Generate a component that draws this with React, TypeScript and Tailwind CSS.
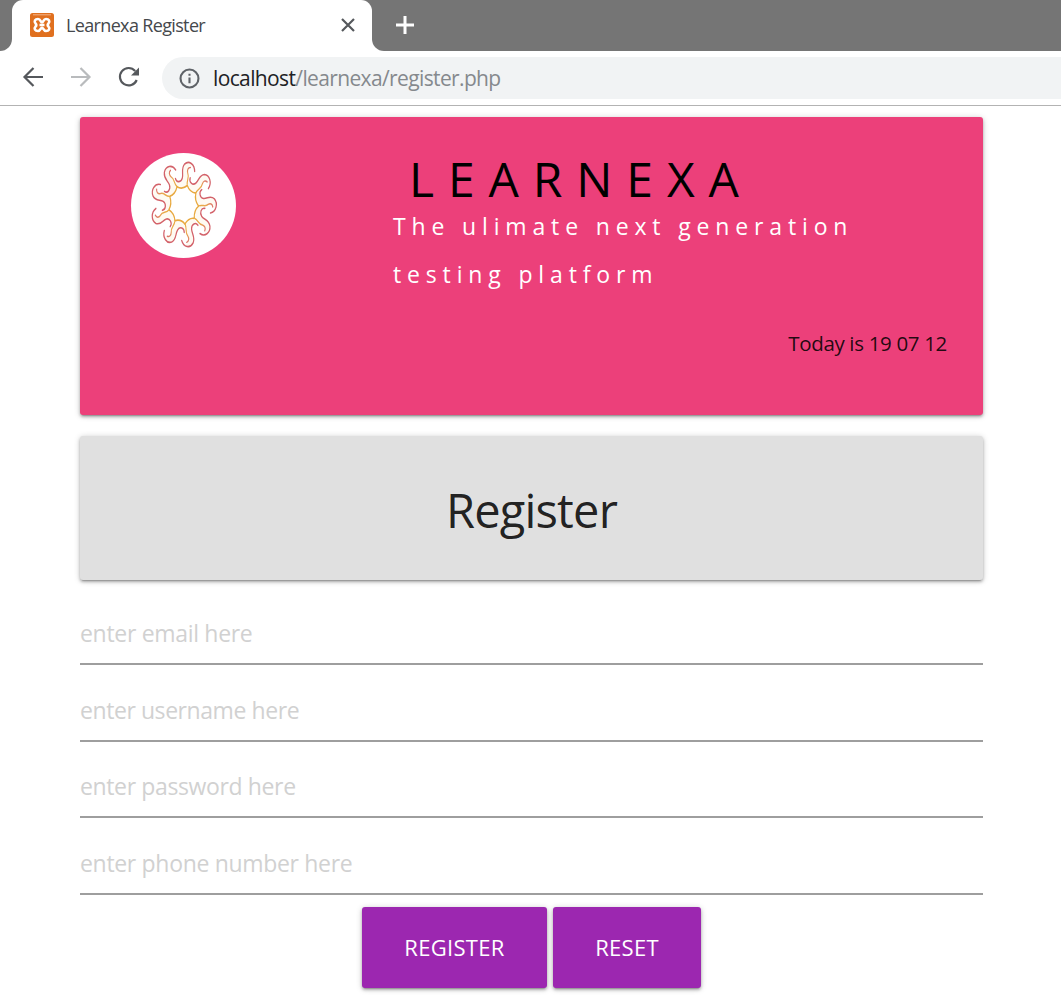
import React from "react";

const arms = [0, 40, 80, 120, 160, 200, 240, 280, 320];

function SunLogo() {
  return (
    <svg viewBox="0 0 105 105" className="size-[105px] rounded-full bg-white" fill="none" strokeLinecap="round">
      <defs>
        <radialGradient id="sun" gradientUnits="userSpaceOnUse" cx="0" cy="0" r="43">
          <stop offset="0.45" stopColor="#e8a940" />
          <stop offset="0.68" stopColor="#eaa950" />
          <stop offset="0.86" stopColor="#dd7a68" />
          <stop offset="1" stopColor="#d0606a" />
        </radialGradient>
      </defs>
      <g transform="translate(52.5 51.5) scale(0.77 1)">
        {arms.map((a) => (
          <g key={a} transform={`rotate(${a})`}>
            <path d="M12 -38 C10 -43 4 -43 1 -40 C-3 -36 -1 -32 -1.500 -28 C-2 -22 -7 -21 -10 -24 L-8.400 -17.800 Q-2 -15 5 -19 C3.500 -24 8 -28 5.500 -32 C4 -35 7 -39 12 -38Z" fill="#fefaf2" />
            <path d="M5 -19 Q-2 -14.500 -8.400 -17.800" stroke="url(#sun)" strokeWidth="1.600" />
            <path d="M5 -19 C3.500 -24 8 -27 5.500 -31.500 C4.500 -34.500 6 -37 9 -37" stroke="url(#sun)" strokeWidth="1.500" />
            <path d="M14.500 -33 C14.500 -40.500 7 -44.500 1.500 -40.500 C-3.500 -36 0 -31 -1.500 -26.500 C-3 -22 -9 -21.500 -10.500 -26" stroke="#d3626a" strokeWidth="1.600" />
          </g>
        ))}
      </g>
    </svg>
  );
}

function Favicon() {
  return (
    <svg viewBox="0 0 24 24" className="size-6" fill="none">
      <rect width="24" height="24" rx="2.5" fill="#e0701f" />
      <path d="M3 1.800H21" stroke="#f3b48a" strokeWidth="1" />
      <path
        d="M9.500 12H14.500M12 9.300C10.500 9.300 10.800 6 8 6C5 6 3.800 8.500 5.500 10.300C6.600 11.500 6.600 12.500 5.500 13.700C3.800 15.500 5 18 8 18C10.800 18 10.500 14.700 12 14.700C13.500 14.700 13.200 18 16 18C19 18 20.200 15.500 18.500 13.700C17.400 12.500 17.400 11.500 18.500 10.300C20.200 8.500 19 6 16 6C13.200 6 13.500 9.300 12 9.300Z"
        stroke="#fff"
        strokeWidth="2.600"
        strokeLinejoin="round"
      />
    </svg>
  );
}

function Browser() {
  return (
    <header>
      <div className="flex h-[51px] bg-white">
        <div className="w-3 rounded-br-[12px] bg-[#757575]" />
        <div className="w-[360px] bg-[#757575]">
          <div className="flex h-full items-center rounded-t-[11px] bg-white pb-0.5 pl-[18px] pr-[17px]">
            <Favicon />
            <span className="ml-3 text-[18px] leading-6 tracking-[-0.650px] text-[#45484c]">Learnexa Register</span>
            <svg viewBox="0 0 14 14" className="ml-auto size-3.5" stroke="#55585c" strokeWidth="2.200">
              <path d="M1 1l12 12M13 1L1 13" />
            </svg>
          </div>
        </div>
        <div className="flex flex-1 items-center rounded-bl-[12px] bg-[#757575] pb-0.5 pl-[23px]">
          <svg viewBox="0 0 20 20" className="size-5" stroke="#fff" strokeWidth="3">
            <path d="M10 1v18M1 10h18" />
          </svg>
        </div>
      </div>
      <div className="flex h-[55px] items-center border-b border-[#b3b3b3] pl-[22px]">
        <svg viewBox="0 0 22 22" className="mb-0.5 size-[22px]" fill="none" stroke="#55585c" strokeWidth="2.200">
          <path d="M21 11H2.500M11.500 2L2.500 11l9 9" />
        </svg>
        <svg viewBox="0 0 22 22" className="mb-0.5 ml-[26px] size-[22px]" fill="none" stroke="#b9bbbd" strokeWidth="2.200">
          <path d="M1 11h18.500M10.500 2l9 9-9 9" />
        </svg>
        <svg viewBox="0 0 22 22" className="mb-0.5 ml-[26px] size-[22px]" fill="none" stroke="#55585c" strokeWidth="2.200">
          <path d="M18.700 14A8.700 8.700 0 1 1 17.200 5" />
          <path d="M21 1.500v8h-8z" fill="#55585c" stroke="none" />
        </svg>
        <div className="ml-[22px] flex h-[42px] flex-1 items-center rounded-l-full bg-[#f1f3f4] pl-[17px]">
          <svg viewBox="0 0 22 22" className="size-[21px]" fill="none" stroke="#5f6368" strokeWidth="2.200">
            <circle cx="11" cy="11" r="9.400" />
            <path d="M11 10v6M11 6v2.200" />
          </svg>
          <span className="ml-[13px] text-[21px] leading-7 tracking-[-0.630px] text-[#85898d]">
            <span className="text-[#202124]">localhost</span>/learnexa/register.php
          </span>
        </div>
      </div>
    </header>
  );
}

const shadow =
  "shadow-[0_2px_3px_0_rgba(0,0,0,0.24),0_3px_1px_-2px_rgba(0,0,0,0.15),0_1px_6px_0_rgba(0,0,0,0.2)]";

const fields = [
  { label: "enter email here", cls: "h-[77px] tracking-[-0.310px]" },
  { label: "enter username here", cls: "h-[77px] tracking-[-0.430px]" },
  { label: "enter password here", cls: "h-[76px] tracking-[-0.370px]" },
  { label: "enter phone number here", cls: "h-[77px] tracking-[-0.320px]" },
];

export default function App() {
  return (
    <div className="h-[1001px] overflow-hidden bg-white font-['Open_Sans','Noto_Sans',sans-serif]">
      <Browser />
      <main className="ml-20 w-[903px] pt-[11px]">
        <section className={`flex h-[298px] rounded-[3px] bg-[#ec407a] ${shadow}`}>
          <div className="w-[313px] pl-[51px] pt-9">
            <SunLogo />
          </div>
          <div className="flex flex-1 flex-col pr-9 pt-[38px]">
            <h1 className="pl-[16px] text-[48px] leading-[48px] tracking-[13.900px] text-black">LEARNEXA</h1>
            <p className="-mt-px w-[500px] text-[23px] leading-12 tracking-[5.850px] text-white">
              The ulimate next generation
              <br />
              testing platform
            </p>
            <p className="mt-[31px] self-end text-[20.500px] leading-7 tracking-[-0.330px] text-black/87">Today is 19 07 12</p>
          </div>
        </section>
        <section className={`mt-[21px] flex h-[144px] items-center justify-center rounded-[3px] bg-[#e0e0e0] pt-1 ${shadow}`}>
          <h2 className="text-[47px] leading-none tracking-[-0.800px] text-black/87">Register</h2>
        </section>
        <form className="pt-2" onSubmit={(e) => e.preventDefault()}>
          {fields.map((f) => (
            <label key={f.label} className={`flex items-end border-b-2 border-[#9e9e9e] pb-[14px] text-[23px] leading-8 text-[#d1d1d1] ${f.cls}`}>
              {f.label}
            </label>
          ))}
          <div className="mt-3 flex justify-center gap-1.5 text-[22px] tracking-[0.300px] text-white">
            <button className={`h-[81px] w-[185px] rounded-[3px] bg-[#9c27b0] ${shadow}`}>REGISTER</button>
            <button className={`h-[81px] w-[148px] rounded-[3px] bg-[#9c27b0] ${shadow}`}>RESET</button>
          </div>
        </form>
      </main>
    </div>
  );
}
